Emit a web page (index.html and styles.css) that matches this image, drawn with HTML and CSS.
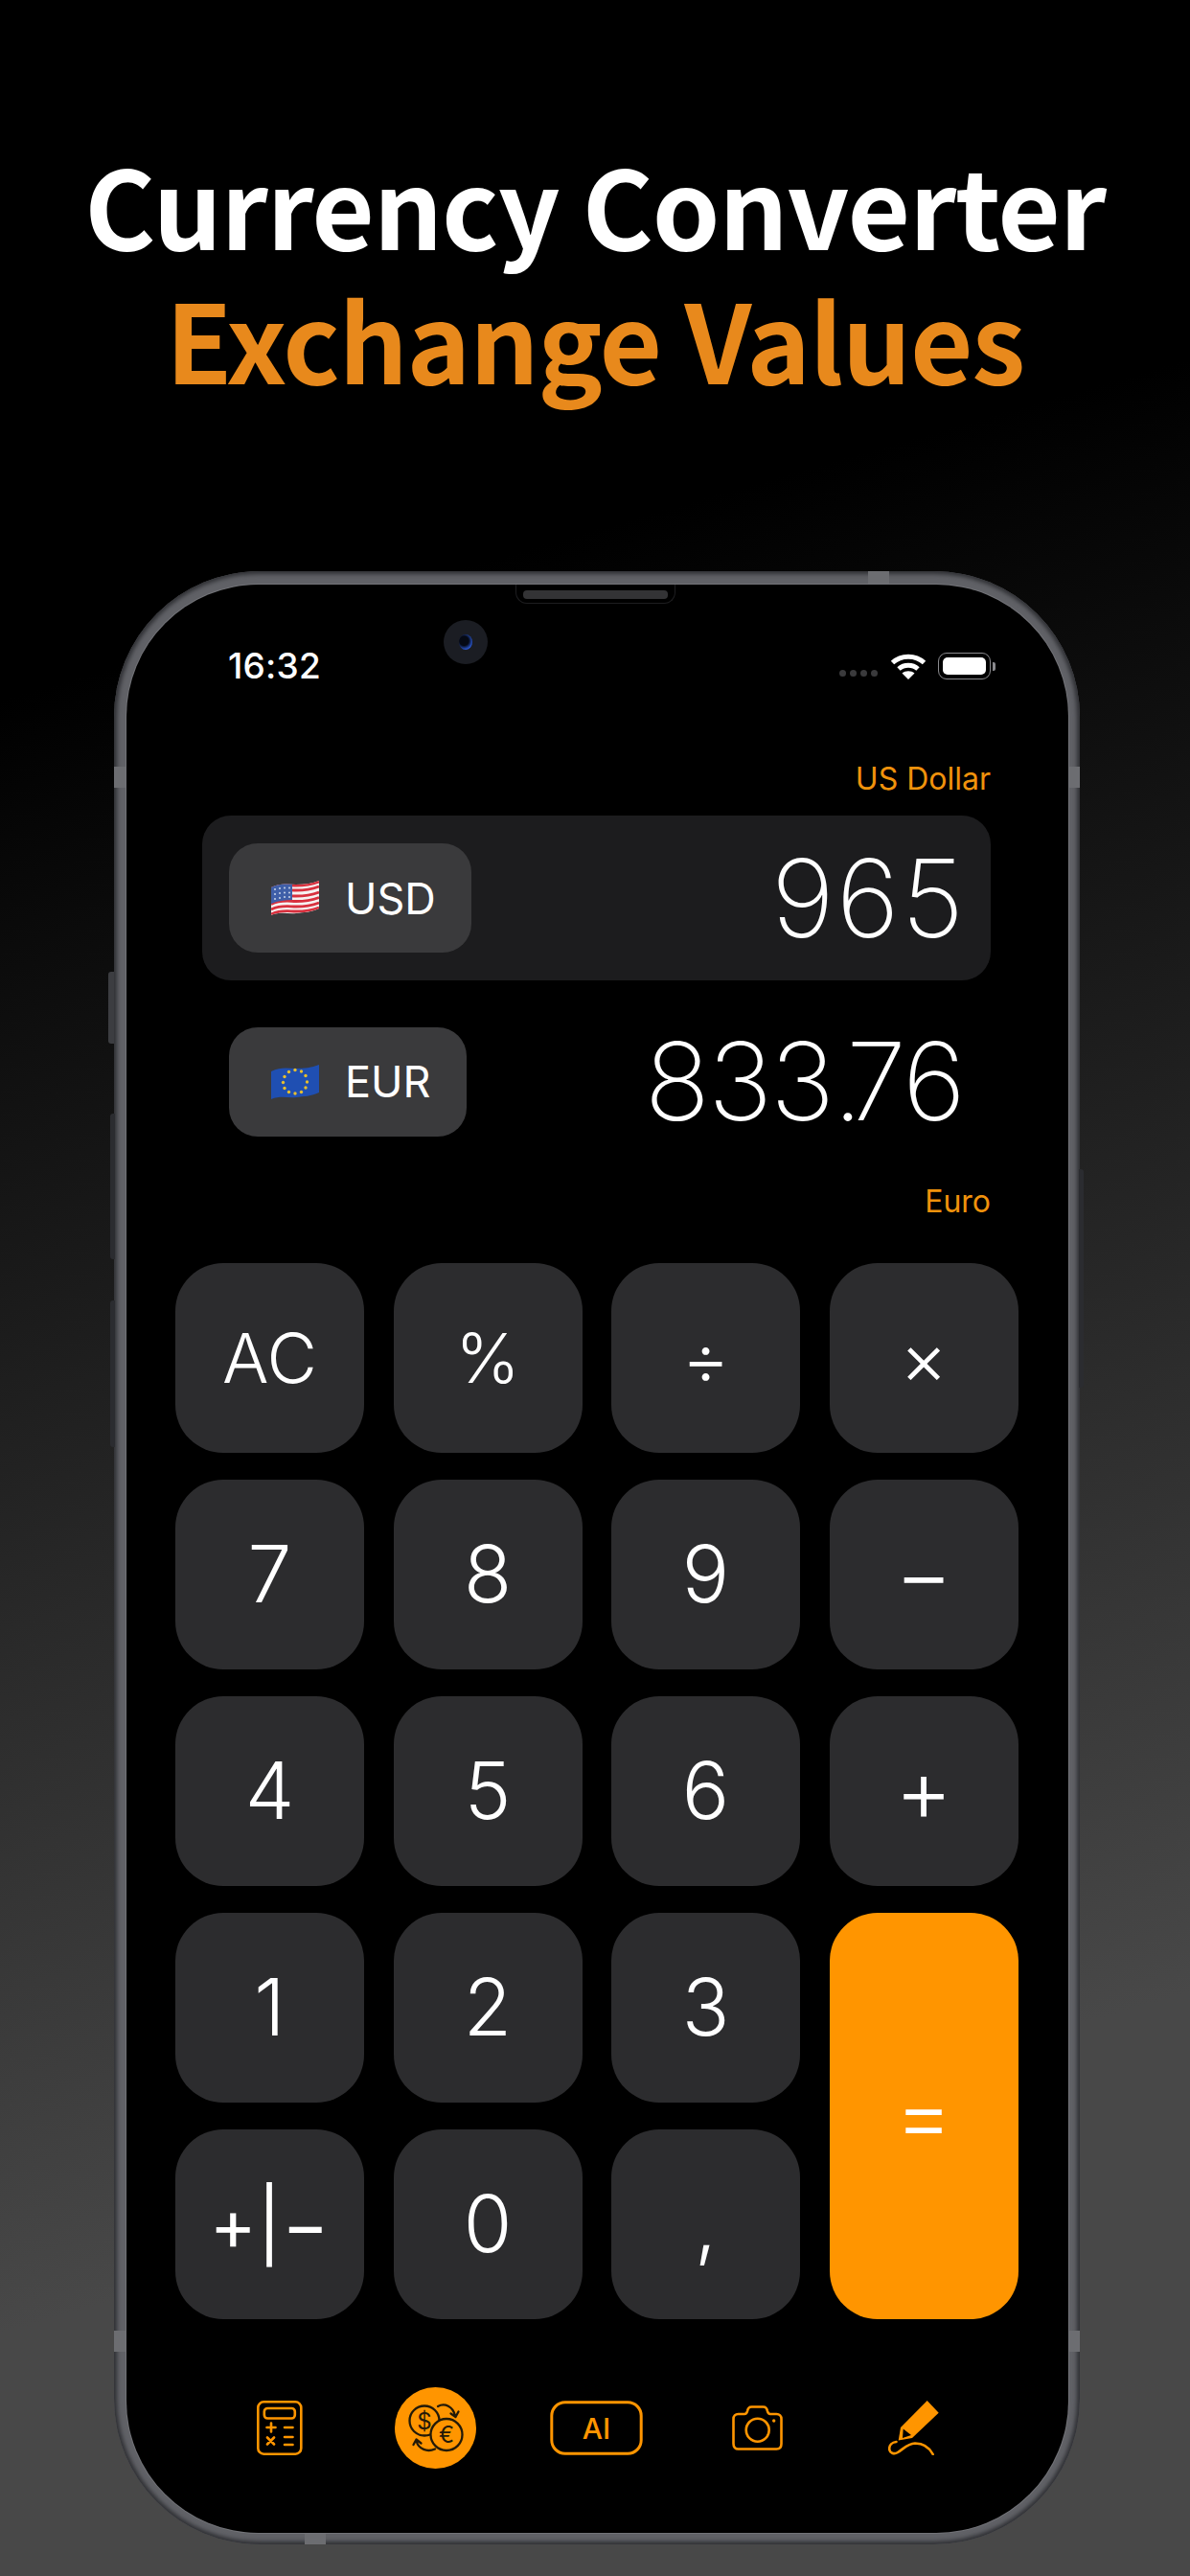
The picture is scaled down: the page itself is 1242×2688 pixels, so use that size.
FILE: index.html
```html
<!DOCTYPE html>
<html lang="en">
<head>
<meta charset="utf-8">
<title>Currency Converter</title>
<link rel="stylesheet" href="styles.css">
</head>
<body>
<header class="headline">
  <h1 class="headline-white">Currency Converter</h1>
  <h2 class="headline-orange">Exchange Values</h2>
</header>
<div class="phone">
  <span class="side-btn btn-a"></span>
  <span class="side-btn btn-b"></span>
  <span class="side-btn btn-c"></span>
  <span class="side-btn btn-d"></span>
  <span class="band band-l1"></span>
  <span class="band band-r1"></span>
  <span class="band band-l2"></span>
  <span class="band band-r2"></span>
  <span class="band band-t"></span>
  <span class="band band-b"></span>
  <main class="screen">
    <div class="speaker"><span class="speaker-bar"></span></div>
    <div class="camera"><span class="lens"></span></div>
    <div class="status">
      <span class="time">16:32</span>
      <div class="status-right">
        <div class="signal"><i></i><i></i><i></i><i></i></div>
        <svg class="wifi" width="38" height="28" viewBox="0 0 38 28">
          <path d="M2.500 10.500C11.500 2 26.500 2 35.500 10.500" fill="none" stroke="#fff" stroke-width="5"/>
          <path d="M9 17C14.500 12 23.500 12 29 17" fill="none" stroke="#fff" stroke-width="5"/>
          <path d="M19 28L12.500 21.500C16 18.600 22 18.600 25.500 21.500Z" fill="#fff"/>
        </svg>
        <div class="battery"><span class="battery-fill"></span></div>
        <span class="battery-cap"></span>
      </div>
    </div>
    <div class="label label-top">US Dollar</div>
    <section class="row card">
      <div class="pill pill-usd">
        <svg class="flag" width="50" height="38" viewBox="0 0 50 38">
          <defs><clipPath id="usclip"><path d="M0 8C10 3 18 5 26 5S42 4 50 1V30C42 34 34 34 26 35S10 33 0 37Z"/></clipPath></defs>
          <g clip-path="url(#usclip)">
            <rect width="50" height="38" fill="#f6f2f2"/>
            <g fill="none" stroke="#d8303e" stroke-width="2.800">
              <path d="M0 9C10 4 18 6 26 6S42 5 50 2"/>
              <path d="M0 14C10 9 18 11 26 11S42 10 50 7"/>
              <path d="M0 20C10 15 18 17 26 17S42 16 50 13"/>
              <path d="M0 25.500C10 20.500 18 22.500 26 22.500S42 21.500 50 18.500"/>
              <path d="M0 31C10 26 18 28 26 28S42 27 50 24"/>
              <path d="M0 36C10 31 18 33 26 33S42 32 50 29"/>
            </g>
            <path d="M0 4H22V21C14 21 8 22 0 25Z" fill="#3f5fa8"/>
            <g fill="#c9d4ea">
              <circle cx="4" cy="10" r="1"/><circle cx="9" cy="9" r="1"/><circle cx="14" cy="8.500" r="1"/><circle cx="19" cy="8.500" r="1"/>
              <circle cx="4" cy="15" r="1"/><circle cx="9" cy="14" r="1"/><circle cx="14" cy="13.500" r="1"/><circle cx="19" cy="13.500" r="1"/>
              <circle cx="4" cy="20" r="1"/><circle cx="9" cy="19" r="1"/><circle cx="14" cy="18" r="1"/><circle cx="19" cy="18" r="1"/>
            </g>
          </g>
        </svg>
        <span class="code">USD</span>
      </div>
      <div class="value">965</div>
    </section>
    <section class="row row-eur">
      <div class="pill pill-eur">
        <svg class="flag" width="50" height="38" viewBox="0 0 50 38">
          <path d="M0 8C10 3 18 5 26 5S42 4 50 1V30C42 34 34 34 26 35S10 33 0 37Z" fill="#1f4fb2"/>
          <g fill="#e8bf2e">
            <circle cx="25" cy="6.500" r="1.700"/><circle cx="31.500" cy="8" r="1.700"/><circle cx="36" cy="12.500" r="1.700"/><circle cx="37.500" cy="19" r="1.700"/><circle cx="36" cy="25" r="1.700"/><circle cx="31.500" cy="29.500" r="1.700"/>
            <circle cx="25" cy="31" r="1.700"/><circle cx="18.500" cy="29.500" r="1.700"/><circle cx="14" cy="25.500" r="1.700"/><circle cx="12.500" cy="19.500" r="1.700"/><circle cx="14" cy="13.500" r="1.700"/><circle cx="18.500" cy="8.500" r="1.700"/>
          </g>
        </svg>
        <span class="code">EUR</span>
      </div>
      <div class="value value-eur">833<span class="dot">.</span>76</div>
    </section>
    <div class="label label-bottom">Euro</div>
    <section class="keypad">
      <button class="key key-sm">AC</button>
      <button class="key key-sm">%</button>
      <button class="key key-mid">÷</button>
      <button class="key key-mid">×</button>
      <button class="key">7</button>
      <button class="key">8</button>
      <button class="key">9</button>
      <button class="key key-op">−</button>
      <button class="key">4</button>
      <button class="key">5</button>
      <button class="key">6</button>
      <button class="key key-op">+</button>
      <button class="key">1</button>
      <button class="key">2</button>
      <button class="key">3</button>
      <button class="key key-op key-equals">=</button>
      <button class="key key-sm key-sign">+|−</button>
      <button class="key">0</button>
      <button class="key">,</button>
    </section>
    <nav class="tabs">
      <svg width="48" height="57" viewBox="0 0 48 57" fill="none" stroke="#ff9500" stroke-width="2.600" stroke-linecap="round">
        <rect x="1.300" y="1.300" width="45" height="54.400" rx="6"/>
        <rect x="7.800" y="8" width="32" height="10.500" rx="3.500"/>
        <path d="M15 23.500V32.500M10.500 28H19.500M29 28H37.500M11 38.500L18 45.500M18 38.500L11 45.500M29 38H37.500M29 46H37.500"/>
      </svg>
      <svg width="85" height="85" viewBox="0 0 85 85" fill="none" stroke="#231a08" stroke-width="2.300" stroke-linecap="round" stroke-linejoin="round">
        <circle cx="42.500" cy="42.500" r="42.500" fill="#ff9500" stroke="none"/>
        <circle cx="31" cy="35" r="15.500"/>
        <circle cx="54" cy="49.500" r="16.500" fill="#ff9500"/>
        <text x="31" y="43.500" class="coin">$</text>
        <text x="54" y="58" class="coin">€</text>
        <path d="M45 20C52 16 61 20 63 30M58.500 27.500L63.500 31L66.500 25.500"/>
        <path d="M42 64.500C34 68 25 65 22.500 56M27.500 58.500L22.500 54.500L19.500 60"/>
      </svg>
      <svg width="97" height="57" viewBox="0 0 97 57">
        <rect x="1.800" y="1.800" width="93.400" height="53.400" rx="14" fill="none" stroke="#ff9500" stroke-width="3"/>
        <text x="48.500" y="39.500" class="ai">AI</text>
      </svg>
      <svg width="53" height="47" viewBox="0 0 53 47" fill="none" stroke="#ff9500" stroke-width="2.600" stroke-linejoin="round">
        <path d="M6.500 9H13C15 9 15.500 8 16 6C16.500 3 17.500 1.500 20.500 1.500H32.500C35.500 1.500 36.500 3 37 6C37.500 8 38 9 40 9H46.500C49.500 9 51.500 11 51.500 14V40C51.500 43.500 49.500 45.500 46.500 45.500H6.500C3.500 45.500 1.500 43.500 1.500 40V14C1.500 11 3.500 9 6.500 9Z"/>
        <circle cx="26.700" cy="25.700" r="12"/>
        <circle cx="43.700" cy="16" r="1.700" fill="#ff9500" stroke="none"/>
      </svg>
      <svg width="53" height="57" viewBox="0 0 53 57" fill="none">
        <path d="M10.700 41.500L13 28L40.700 0L52.700 12.700L25 39Z" fill="#ff9500"/>
        <path d="M15.700 29.500L24 36L15 39Z" fill="#000"/>
        <path d="M8.500 43C4 43.500 1 46.500 1.200 50.500C1.500 54.500 6 56.500 10 54C16 50.500 20 44.800 28 44.500C36 44.500 43 49 46.700 56" stroke="#ff9500" stroke-width="2.600" stroke-linecap="round"/>
      </svg>
    </nav>
  </main>
</div>
</body>
</html>
```

FILE: styles.css
```css
* { box-sizing: border-box; }
html, body { margin: 0; padding: 0; }
body {
  width: 1242px;
  height: 2688px;
  overflow: hidden;
  background: linear-gradient(164deg, #000 24%, #484848 80%);
  font-family: Inter, "Liberation Sans", sans-serif;
}
.headline {
  height: 596px;
  padding-top: 142px;
  text-align: center;
  font-family: "Noto Sans CJK JP", "Noto Sans", sans-serif;
  font-weight: 700;
  font-size: 113px;
  line-height: 140px;
  letter-spacing: -1.200px;
}
.headline-white, .headline-orange { margin: 0; font: inherit; white-space: nowrap; }
.headline-white { color: #fff; }
.headline-orange { color: #e8891c; }

.phone {
  position: relative;
  width: 1008px;
  height: 2059px;
  margin-left: 119px;
  padding: 14px 12px 12px 13px;
  border-radius: 152px;
  background: #606166;
  box-shadow: inset 0 0 4px 3px #2f3034;
}
.screen {
  position: relative;
  height: 2033px;
  border-radius: 138px;
  background: #000;
  box-shadow: 0 0 0 1px #727378;
  color: #fff;
  overflow: hidden;
}
.side-btn { position: absolute; left: -4px; width: 5px; background: #2b2c30; border-radius: 3px 0 0 3px; }
.btn-a { top: 418px; height: 75px; left: -6px; width: 6px; background: #3c3d41; }
.btn-b { top: 566px; height: 152px; }
.btn-c { top: 761px; height: 153px; }
.btn-d { left: auto; right: -4px; top: 624px; height: 228px; border-radius: 0 3px 3px 0; }
.band { position: absolute; background: #6c6d71; }
.band-l1 { left: 0; top: 204px; width: 13px; height: 22px; }
.band-r1 { right: 0; top: 204px; width: 12px; height: 22px; }
.band-l2 { left: 0; top: 1836px; width: 13px; height: 22px; }
.band-r2 { right: 0; top: 1836px; width: 12px; height: 22px; }
.band-t { top: 0; left: 787px; width: 22px; height: 14px; }
.band-b { bottom: 0; left: 199px; width: 22px; height: 12px; }

.speaker {
  position: absolute;
  top: 0;
  left: 406px;
  width: 167px;
  height: 20px;
  padding: 6px 7px 0;
  background: #000;
  border: 1.500px solid #1e1e20;
  border-top: none;
  border-radius: 0 0 12px 12px;
}
.speaker-bar { display: block; height: 9px; border-radius: 4px; background: #333335; }
.camera {
  position: absolute;
  top: 37px;
  left: 331px;
  width: 46px;
  height: 46px;
  display: flex;
  align-items: center;
  justify-content: center;
  border-radius: 50%;
  background: #1b1d23;
}
.lens {
  width: 14px;
  height: 16px;
  border-radius: 50%;
  background: radial-gradient(circle at 38% 42%, #050914 38%, #2a57d0 72%, #10224a 100%);
}

.status {
  display: flex;
  justify-content: space-between;
  align-items: center;
  height: 28px;
  margin-top: 71px;
  padding: 0 76px 0 106px;
}
.time { font-size: 37px; font-weight: 500; line-height: 28px; letter-spacing: 0.200px; }
.status-right { display: flex; align-items: center; }
.signal { display: flex; gap: 4px; margin: 15px 13px 0 0; }
.signal i { width: 7px; height: 7px; border-radius: 50%; background: #3a3a3c; }
.wifi { display: block; margin-right: 12px; }
.battery {
  width: 55px;
  height: 28px;
  padding: 4px;
  border: 1.500px solid #8a8a8e;
  border-radius: 9px;
}
.battery-fill { display: block; height: 100%; border-radius: 5px; background: #fff; }
.battery-cap { width: 3px; height: 9px; margin-left: 2px; border-radius: 0 2px 2px 0; background: #8a8a8e; }

.label {
  height: 40px;
  line-height: 40px;
  padding-right: 81px;
  text-align: right;
  font-size: 32px;
  color: #f0920c;
}
.label-top { margin-top: 84px; }
.label-bottom { margin-top: 48px; }
.row {
  display: flex;
  justify-content: space-between;
  align-items: center;
  margin: 0 81px 0 79px;
  padding: 0 34px 0 28px;
}
.card { height: 172px; margin-top: 18px; border-radius: 30px; background: #1c1c1e; }
.row-eur { height: 115px; margin-top: 48px; }
.pill {
  display: flex;
  align-items: center;
  height: 114px;
  padding-left: 44px;
  border-radius: 30px;
  background: #3a3a3c;
}
.pill-usd { width: 253px; }
.pill-eur { width: 248px; }
.flag { display: block; margin-right: 27px; }
.code { font-size: 45px; font-weight: 420; line-height: 1; }
.value { margin-right: -8px; font-size: 113px; font-weight: 150; line-height: 115px; letter-spacing: 2px; }
.value-eur { margin-right: -6px; letter-spacing: -2px; }
.dot { letter-spacing: -17px; }

.keypad {
  display: grid;
  grid-template-columns: repeat(4, 197px);
  grid-auto-rows: 198px;
  column-gap: 30.500px;
  row-gap: 28px;
  margin-top: 44px;
  padding-left: 51px;
}
.key {
  display: flex;
  align-items: center;
  justify-content: center;
  padding: 0;
  border: 0;
  border-radius: 50px;
  background: #2c2c2e;
  color: #fff;
  font-family: inherit;
  font-size: 82px;
  font-weight: 350;
  line-height: 1;
}
.key-sm { font-size: 72px; }
.key-mid { font-size: 76px; font-weight: 350; }
.key-op { padding-bottom: 2px; font-size: 92px; font-weight: 350; }
.key-sign { font-size: 74px; font-weight: 400; letter-spacing: 1px; }
.key-equals {
  grid-column: 4;
  grid-row: 4 / span 2;
  background: #ff9500;
}

.tabs {
  display: grid;
  grid-template-columns: 162px 163px 173px 163px 162px;
  justify-items: center;
  align-items: center;
  height: 85px;
  margin: 71px 81px 0 79px;
}
.coin { font-family: "Inter", sans-serif; font-size: 24px; font-weight: 400; text-anchor: middle; fill: #231a08; stroke: none; }
.ai { font-family: "Inter", sans-serif; font-size: 30px; font-weight: 500; text-anchor: middle; fill: #ff9500; }
```
